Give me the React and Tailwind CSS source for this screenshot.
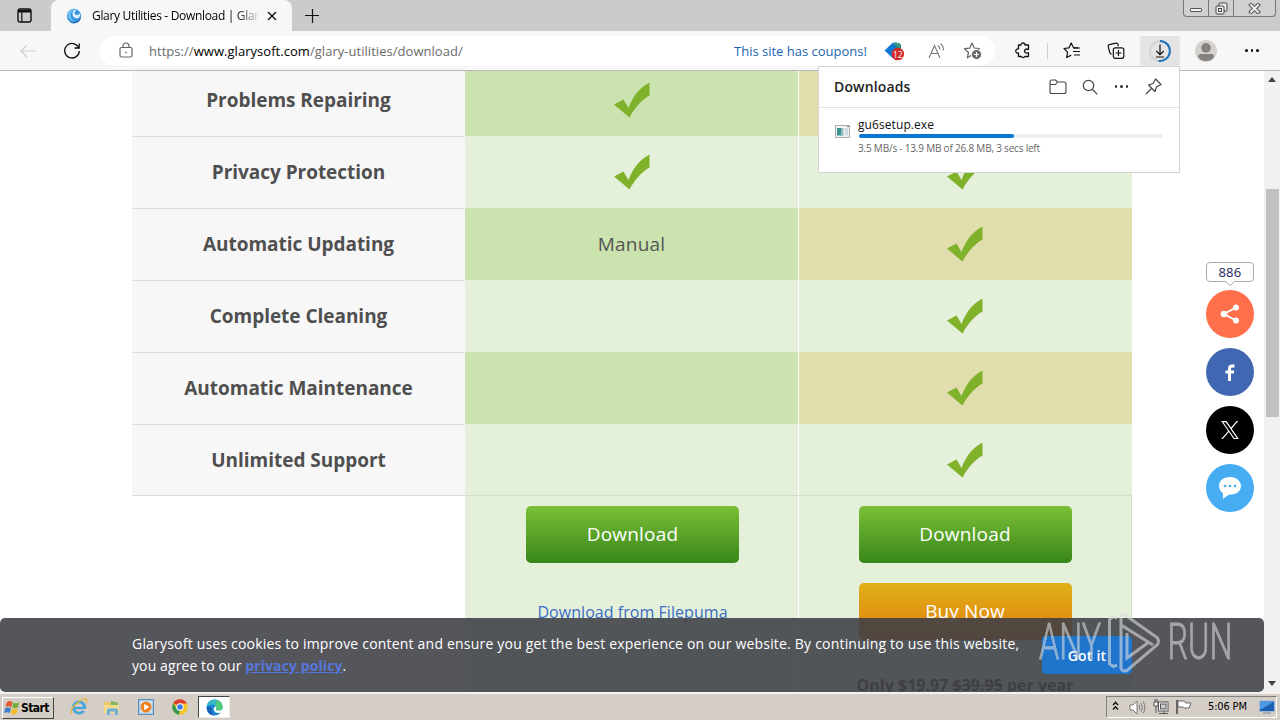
import React from "react";

const rows = [
  { name: "Problems Repairing", free: "check", pro: "check" },
  { name: "Privacy Protection", free: "check", pro: "check" },
  { name: "Automatic Updating", free: "Manual", pro: "check" },
  { name: "Complete Cleaning", free: "", pro: "check" },
  { name: "Automatic Maintenance", free: "", pro: "check" },
  { name: "Unlimited Support", free: "", pro: "check" },
];

function Check() {
  return (
    <svg width="36" height="36" viewBox="0 0 36 36">
      <path
        d="M0 22.5 L9.5 17.5 L14.5 26 C19 14.5 25 6 35.5 0.5 V13.5 C27.5 18 21 25.500 15.500 35.500 Z"
        fill="#7fb12b"
      />
    </svg>
  );
}

function Cell({ value }) {
  if (value === "check") return <Check />;
  return (
    <span className="text-[19px] tracking-[0.2px] text-[#555]">{value}</span>
  );
}

function TabStrip() {
  return (
    <div className="w-full h-[31px] bg-[#cbcbcb] flex flex-row items-start">
      <div className="w-[49px] h-[31px] flex items-center justify-center">
        <svg width="15" height="15" viewBox="0 0 15 15" fill="none" stroke="#111">
          <rect x="1" y="1" width="13" height="13" rx="2" strokeWidth="1.4" />
          <path d="M1 3.2h13" strokeWidth="2.600" />
          <path d="M4.800 3v11" strokeWidth="1.200" />
        </svg>
      </div>
      <div className="w-[241px] h-[31px] bg-[#f7f7f7] rounded-t-[8px] flex flex-row items-center ml-[2px] pl-[15px]">
        <svg width="16" height="16" viewBox="0 0 16 16">
          <circle cx="8" cy="8" r="7.200" fill="#3d97e0" />
          <path d="M2.500 13Q9 17 15 9.500A7.300 7.300 0 0 1 2.500 13Z" fill="#1c5bb0" />
          <path d="M1.500 5.500Q4 1 9.500.8 4 4 4.500 8 5 11.500 9 13.500 2 13 1.500 5.500Z" fill="#6cc4f5" />
          <path d="M8.500 1.800Q5.500 5 7 8t5.500 2.200Q14.500 8 14 5.500 11 8 9 6.500 7.500 5 10.500 1.800Z" fill="#e2f3fd" />
        </svg>
        <span className="ml-[10px] w-[166px] overflow-hidden whitespace-nowrap text-[12px] leading-[16px] tracking-[-0.32px] bg-gradient-to-r from-black from-84% to-[#d5d5d5] bg-clip-text text-transparent">
          Glary Utilities - Download | Glar
        </span>
        <svg className="ml-[9px]" width="10" height="10" viewBox="0 0 10 10">
          <path d="M1 1l8 8M9 1l-8 8" stroke="#111" strokeWidth="1.400" />
        </svg>
      </div>
      <svg className="mt-[9px] ml-[13px]" width="14" height="14" viewBox="0 0 14 14">
        <path d="M7.500 0v14M0 6.500h14" stroke="#111" strokeWidth="1.200" />
      </svg>
      <div className="ml-auto mr-[4px] w-[93px] h-[17px] border border-t-0 border-[#777] rounded-b-[4px] flex flex-row bg-[#d0d0d0]">
        <div className="w-[25px] flex items-center justify-center border-r border-[#777]">
          <div className="w-[12px] h-[4px] mt-[4px] border border-[#555] rounded-[1px] bg-[#f4f4f4]" />
        </div>
        <div className="w-[25px] flex items-center justify-center border-r border-[#777]">
          <svg width="13" height="13" viewBox="0 0 13 13" fill="#eee" stroke="#444">
            <rect x="4" y="1" width="8" height="8" rx="1" />
            <rect x="1" y="4" width="8" height="8" rx="1" />
            <rect x="3.500" y="6.500" width="3" height="3" />
          </svg>
        </div>
        <div className="flex-1 flex items-center justify-center">
          <svg width="13" height="11" viewBox="0 0 13 11">
            <path d="M3 2l7 7M10 2l-7 7" stroke="#555" strokeWidth="4" strokeLinecap="square" />
            <path d="M3 2l7 7M10 2l-7 7" stroke="#eee" strokeWidth="2" strokeLinecap="square" />
          </svg>
        </div>
      </div>
    </div>
  );
}

function AddressBar() {
  return (
    <div className="w-[895px] h-[30px] bg-white rounded-full flex flex-row items-center pl-[19px]">
      <svg width="14" height="17" viewBox="0 0 14 17" fill="none" stroke="#666">
        <rect x="1" y="5.500" width="12" height="9.500" rx="1.500" strokeWidth="1.200" />
        <path d="M4 5.500V4a3 3 0 0 1 6 0v1.500" strokeWidth="1.200" />
        <circle cx="7" cy="10.300" r="0.900" fill="#666" stroke="none" />
      </svg>
      <span className="ml-[16px] w-[585px] text-[13px] leading-[18px] tracking-[0.04px] text-[#6b6b6b] whitespace-nowrap">
        https://<span className="text-black">www.glarysoft.com</span>
        /glary-utilities/download/
      </span>
      <span className="w-[134px] text-[13px] leading-[18px] text-[#1a66b0] whitespace-nowrap">
        This site has coupons!
      </span>
      <svg className="ml-[16px]" width="22" height="20" viewBox="0 0 22 20">
        <path d="M8 2h7l2 2v8l-5 2z" fill="#277b72" />
        <path d="M0.500 9.500L8.500 2l3 .5v13l-3 1.500z" fill="#0f78d4" />
        <path d="M8 2l4-1 4 3v4l-3-3z" fill="#3c9c8b" />
        <circle cx="13.800" cy="13" r="6.300" fill="#d32a2a" />
        <text x="13.800" y="16.500" textAnchor="middle" fontSize="8.500" fill="#fff">12</text>
      </svg>
      <svg className="ml-[22px]" width="18" height="16" viewBox="0 0 18 16" fill="none" stroke="#777" strokeWidth="1.100">
        <path d="M1 15L6.500 2.500 12 15M3 10.500h7" />
        <path d="M10 2.500q2 1.500 1.800 4M12.500 0.800q3.300 2.700 2.800 6.700" />
      </svg>
      <svg className="ml-[17px]" width="20" height="18" viewBox="0 0 20 18">
        <path d="M9 1l2.200 5 5.300.5-4 3.700 1.200 5.300L9 13l-4.700 2.800L5.500 10.500l-4-3.800 5.300-.6z" fill="none" stroke="#666" strokeWidth="1.200" strokeLinejoin="round" />
        <circle cx="13.500" cy="12.500" r="5" fill="#666" stroke="#fff" strokeWidth="1" />
        <path d="M13.500 10v5M11 12.500h5" stroke="#fff" strokeWidth="1.200" />
      </svg>
    </div>
  );
}

function Toolbar() {
  return (
    <div className="w-full h-[40px] bg-[#f7f7f7] border-b border-[#b9b9b9] flex flex-row items-center">
      <div className="w-[56px] flex justify-center">
        <svg width="16" height="14" viewBox="0 0 16 14" fill="none" stroke="#cfcfcf" strokeWidth="1.200">
          <path d="M16 7H1M7 1L1 7l6 6" />
        </svg>
      </div>
      <div className="w-[32px] mr-[12px] flex justify-center">
        <svg width="18" height="18" viewBox="0 0 18 18" fill="none" stroke="#111" strokeWidth="1.300">
          <path d="M15.800 6A7.300 7.300 0 1 0 16.300 9" />
          <path d="M16.200 1.500V6h-4.700" />
        </svg>
      </div>
      <AddressBar />
      <div className="ml-[8px] w-[40px] flex justify-center">
        <svg width="16" height="17" viewBox="0 0 16 17" fill="none" stroke="#111" strokeWidth="1.300" strokeLinejoin="round">
          <path d="M3.500 3H6a2 2 0 0 1 4 0h3.500v4a.5.500 0 0 1-.8.400 2 2 0 1 0 0 3.300.5.500 0 0 1 .8.400V14.500H10a2 2 0 0 1-3.500 0H3.500V11A2.100 2.100 0 1 1 3.500 7Z" />
        </svg>
      </div>
      <div className="ml-[4px] w-px h-[16px] bg-[#cfcfcf]" />
      <div className="ml-[4px] w-[40px] flex justify-center">
        <svg width="18" height="17" viewBox="0 0 18 17" fill="none" stroke="#111" strokeWidth="1.200" strokeLinejoin="round">
          <path d="M15 5.800h-4.400L8.200 1 6 5.800 1 6.500l3.600 3.700-.9 5.300 4.500-2.400" />
          <path d="M10.500 6H17M10 9.500h7M11 13h6" />
        </svg>
      </div>
      <div className="ml-[4px] w-[40px] flex justify-center">
        <svg width="18" height="18" viewBox="0 0 18 18" fill="none" stroke="#111" strokeWidth="1.200">
          <path d="M4.500 12.500L2.800 11 1.200 4.500Q1 3 2.300 2.600L9 1.200q1.600-.3 2 1.300l.4 1.700" />
          <rect x="6.300" y="5.800" width="10.500" height="10.500" rx="2" fill="#f7f7f7" />
          <path d="M11.500 8v6M8.500 11h6" />
        </svg>
      </div>
      <div className="ml-[4px] w-[40px] h-[30px] bg-[#e4e4e4] rounded-[3px] flex items-center justify-center">
        <svg width="24" height="24" viewBox="0 0 24 24" fill="none">
          <circle cx="12" cy="12" r="10" stroke="#d4d4d4" strokeWidth="2" />
          <path d="M12 2a10 10 0 1 1-1.500 19.900" stroke="#1e73be" strokeWidth="2" />
          <path d="M12 5.500v10M8.300 12l3.700 3.700 3.700-3.700M8 18h8" stroke="#111" strokeWidth="1.200" />
        </svg>
      </div>
      <div className="ml-[6px] w-[40px] flex justify-center">
        <svg width="22" height="22" viewBox="0 0 22 22">
          <circle cx="11" cy="11" r="11" fill="#d4d1ce" />
          <circle cx="11" cy="7.800" r="4.800" fill="#85817e" />
          <path d="M3 16.500Q3 14 6 14h10q3 0 3 2.500-2 4.500-8 4.500t-8-4.500Z" fill="#85817e" />
        </svg>
      </div>
      <div className="ml-[6px] w-[40px] flex justify-center gap-[3px]">
        <div className="w-[2.500px] h-[2.500px] rounded-full bg-black" />
        <div className="w-[2.500px] h-[2.500px] rounded-full bg-black" />
        <div className="w-[2.500px] h-[2.500px] rounded-full bg-black" />
      </div>
    </div>
  );
}

function DownloadsPopup() {
  return (
    <div className="absolute left-[818px] top-[66px] w-[362px] h-[107px] bg-white border border-[#d4d4d4] flex flex-col">
      <div className="h-[41px] border-b border-[#e2e2e2] flex flex-row items-center pl-[15px] pr-[17px] pb-px">
        <h2 className="text-[14px] font-semibold text-[#222] tracking-[0.15px]">Downloads</h2>
        <svg className="ml-auto" width="18" height="16" viewBox="0 0 18 16" fill="none" stroke="#444" strokeWidth="1.100">
          <path d="M1 3q0-2 2-2h3.500l2 2H15q2 0 2 2v7.500q0 2-2 2H3q-2 0-2-2ZM1 5.500h5.500l2-2.500" />
        </svg>
        <svg className="ml-[15px]" width="16" height="16" viewBox="0 0 16 16" fill="none" stroke="#444" strokeWidth="1.200">
          <circle cx="6.500" cy="6.500" r="5.200" />
          <path d="M10.500 10.500l4.800 4.800" />
        </svg>
        <div className="ml-[17px] flex gap-[3px]">
          <div className="w-[2.500px] h-[2.500px] rounded-full bg-[#333]" />
          <div className="w-[2.500px] h-[2.500px] rounded-full bg-[#333]" />
          <div className="w-[2.500px] h-[2.500px] rounded-full bg-[#333]" />
        </div>
        <svg className="ml-[17px]" width="17" height="17" viewBox="0 0 17 17" fill="none" stroke="#444" strokeWidth="1.200" strokeLinejoin="round">
          <path d="M10.500 1l5.500 5.500-1.500.8-3 1.700-1.500 4.500L3.500 7 8 5.500l1.700-3ZM6.500 10.500L1 16" />
        </svg>
      </div>
      <div className="flex flex-row pt-[8px] pl-[16px]">
        <svg className="mt-[9px]" width="15" height="13" viewBox="0 0 15 13">
          <rect x="0.500" y="0.500" width="14" height="12" fill="#f0f2f3" stroke="#a8b0b5" />
          <rect x="2" y="3" width="6" height="7.500" fill="#3c8f90" />
          <rect x="6" y="3" width="2.500" height="7.500" fill="#93bcc5" />
          <rect x="10" y="3" width="3" height="7.500" fill="#ccdbe2" />
          <path d="M12 1.500h2" stroke="#d2734f" />
        </svg>
        <div className="ml-[9px] flex flex-col">
          <span className="-ml-px text-[12px] leading-[17px] tracking-[0.08px] text-[#111]">gu6setup.exe</span>
          <div className="mt-px w-[304px] h-[4px] rounded-full bg-[#ededed]">
            <div className="w-[155px] h-[4px] rounded-full bg-[#0877d2]" />
          </div>
          <span className="-ml-px mt-[3px] text-[10px] leading-[14px] tracking-[-0.2px] text-[#666] whitespace-nowrap">
            3.5 MB/s - 13.9 MB of 26.8 MB, 3 secs left
          </span>
        </div>
      </div>
    </div>
  );
}

function CompareTable() {
  return (
    <div className="w-[1000px] ml-[132px] -mt-[7px] flex flex-col">
      {rows.map((row, i) => (
        <div key={row.name} className="w-full h-[72px] shrink-0 flex flex-row">
          <div className="w-[333px] h-full border-t border-[#dcdcdc] bg-[#f7f7f7] flex items-center justify-center">
            <span className="text-[19px] font-bold text-[#4f4f4f] tracking-[-0.03px] whitespace-nowrap">{row.name}</span>
          </div>
          <div
            className={`w-[333px] h-full flex items-center justify-center ${
              i % 2 === 0 ? "bg-[#cbe3ae]" : "bg-[#e5f0da]"
            }`}
          >
            <Cell value={row.free} />
          </div>
          <div
            className={`w-[334px] h-full border-l border-white pr-[2px] flex items-center justify-center ${
              i % 2 === 0 ? "bg-[#e1deae]" : "bg-[#e5f0da]"
            }`}
          >
            <Cell value={row.pro} />
          </div>
        </div>
      ))}
      <div className="w-full -mt-px h-px shrink-0 bg-[#d8ddd3]" />
      <div className="w-[667px] h-[220px] ml-[333px] flex flex-row">
        <div className="w-[333px] h-full bg-[#e5f0da] flex flex-col items-center pt-[10px] pl-[2px]">
          <button className="shrink-0 w-[213px] h-[57px] rounded-[5px] bg-gradient-to-b from-[#7cc038] to-[#37871a] text-white text-[19px] tracking-[0.18px]">
            Download
          </button>
          <a className="mt-[36px] text-[16px] leading-[26px] tracking-[0.05px] text-[#3b6cc4]">Download from Filepuma</a>
        </div>
        <div className="w-[334px] h-full bg-[#e5f0da] border-l border-l-white border-r border-r-[#d5dfcd] flex flex-col items-center pt-[10px]">
          <button className="shrink-0 w-[213px] h-[57px] rounded-[5px] bg-gradient-to-b from-[#7cc038] to-[#37871a] text-white text-[19px] tracking-[0.18px]">
            Download
          </button>
          <button className="shrink-0 mt-[20px] w-[213px] h-[57px] rounded-[5px] bg-gradient-to-b from-[#dfb017] to-[#df7c10] text-white text-[19px] tracking-[0.1px]">
            Buy Now
          </button>
          <p className="mt-[32px] text-[16px] leading-[26px] font-bold text-[#444] whitespace-nowrap">
            Only $19.97 <s>$39.95</s> per year
          </p>
        </div>
      </div>
    </div>
  );
}

function ShareBar() {
  return (
    <div className="absolute left-[1206px] top-[262px] w-[48px] flex flex-col items-center">
      <div className="w-[48px] h-[20px] border border-[#aaa] rounded-[4px] bg-white text-[13px] leading-[19px] tracking-[0.3px] text-center text-[#21265c]">
        886
      </div>
      <svg className="-mt-px" width="10" height="5" viewBox="0 0 10 5">
        <path d="M0 0l5 4.500L10 0" fill="#fff" stroke="#aaa" />
      </svg>
      <div className="mt-[4px] w-[48px] h-[48px] rounded-full bg-[#ff6f4b] flex items-center justify-center">
        <svg width="20" height="20" viewBox="0 0 20 20">
          <path d="M16 3.500L4 10l12 6.500" fill="none" stroke="#fff" strokeWidth="1.800" />
          <circle cx="16" cy="3.500" r="3" fill="#fff" />
          <circle cx="4" cy="10" r="3.300" fill="#fff" />
          <circle cx="16" cy="16.500" r="3" fill="#fff" />
        </svg>
      </div>
      <div className="mt-[10px] w-[48px] h-[48px] rounded-full bg-[#4267b2] flex items-center justify-center">
        <svg width="10" height="17" viewBox="0 0 10 17">
          <path d="M3 17V9.500H.5v-3H3V4.500Q3 .5 7 .5h2.500v3H7.800Q6 3.500 6 5v1.500h3.300l-.5 3H6V17Z" fill="#fff" />
        </svg>
      </div>
      <div className="mt-[10px] w-[48px] h-[48px] rounded-full bg-black flex items-center justify-center">
        <svg width="18" height="18" viewBox="0 0 24 24" fill="#fff">
          <path d="M14.300 10.200L23 0h-2.100l-7.500 8.800L7.300 0H.3l9.200 13.300L.3 24h2.100l8-9.400 6.500 9.400h7L14.300 10.200Zm-2.900 3.300l-.9-1.300L3.100 1.600h3.200l6 8.500.9 1.400 7.800 11.100h-3.200l-6.400-9.100Z" />
        </svg>
      </div>
      <div className="mt-[10px] w-[48px] h-[48px] rounded-full bg-[#46adf3] flex items-center justify-center">
        <svg width="24" height="22" viewBox="0 0 24 22">
          <path d="M12 0C5.500 0 1 3.800 1 9q0 4.500 4 7.300L5 22l5.500-4.300H12c6.500 0 11-3.700 11-8.700S18.500 0 12 0Z" fill="#fff" />
          <circle cx="7" cy="9" r="1.300" fill="#46adf3" />
          <circle cx="12" cy="9" r="1.300" fill="#46adf3" />
          <circle cx="17" cy="9" r="1.300" fill="#46adf3" />
        </svg>
      </div>
    </div>
  );
}

function CookieBar() {
  return (
    <div className="absolute left-0 top-[618px] w-[1264px] h-[74px] rounded-[5px] bg-[rgba(61,63,70,0.88)] flex flex-row items-center pl-[132px]">
      <p className="w-[910px] text-[14px] leading-[22px] tracking-[0.2px] text-white">
        Glarysoft uses cookies to improve content and ensure you get the best experience on our website. By continuing to use this website,
        <br />
        <span className="tracking-[0.1px]">
          you agree to our <a className="font-bold text-[#5577dd] underline">privacy policy</a>.
        </span>
      </p>
      <button className="w-[90px] h-[38px] rounded-[4px] bg-[#1f74cc] text-white text-[14px] font-semibold tracking-[0.2px]">
        Got it
      </button>
    </div>
  );
}

function Watermark() {
  return (
    <svg className="absolute left-[1036px] top-[606px]" width="200" height="70" viewBox="0 0 200 70" fill="none" opacity="0.6">
      <text x="3" y="53" fontSize="50" textLength="62" lengthAdjust="spacingAndGlyphs" fill="#d8dadd" stroke="#d8dadd" strokeWidth="0.900" className="font-['Roboto'] font-light">ANY</text>
      <path d="M81 12l-4-1.500-3.500 3V58l4 2.500 3.500-1.500" stroke="#dcdee0" strokeWidth="3" />
      <path d="M85 19V10.500Q86 7 89 9L121 31.500q3 4 0 7.500L91 64.500q-4.500 1.500-6-2V19L117 39" stroke="#dcdee0" strokeWidth="3" />
      <path d="M91 27v25l22-16" stroke="#dcdee0" strokeWidth="3" />
      <text x="131.500" y="53" fontSize="50" textLength="65" lengthAdjust="spacingAndGlyphs" fill="#d8dadd" stroke="#d8dadd" strokeWidth="0.900" className="font-['Roboto'] font-light">RUN</text>
    </svg>
  );
}

function Scrollbar() {
  return (
    <div className="w-[16px] h-full bg-[#f1f1f1] flex flex-col items-center">
      <svg className="mt-[6px]" width="8" height="5" viewBox="0 0 8 5">
        <path d="M0 5l4-5 4 5Z" fill="#444" />
      </svg>
      <div className="mt-[107px] w-[13px] h-[228px] bg-[#c1c1c1]" />
      <svg className="mt-auto mb-[6px]" width="8" height="5" viewBox="0 0 8 5">
        <path d="M0 0l4 5 4-5Z" fill="#444" />
      </svg>
    </div>
  );
}

function Taskbar() {
  return (
    <div className="w-full h-[28px] bg-[#d5cec6] border-t-2 border-[#f4f2ef] flex flex-row items-center font-['DejaVu_Sans_Condensed','DejaVu_Sans',sans-serif]">
      <div className="ml-[2px] mt-px w-[52px] h-[22px] bg-[#d5cec6] border border-t-white border-l-white border-r-[#444] border-b-[#444] flex flex-row items-center pl-px">
        <svg width="16" height="16" viewBox="0 0 16 16">
          <path d="M3 2q3-2 5.500.0L7.300 7.200Q4.500 5.500 1.500 7Z" fill="#e2582c" />
          <path d="M9.300 2.500q3 1.500 6-.2L14 7.300q-3 1.600-5.800.2Z" fill="#77ad3f" />
          <path d="M1.200 8Q4 6.800 7 8.200L5.800 13Q3 11.500.0 13Z" fill="#3d80c9" />
          <path d="M8 8.500q3 1.500 5.800.0L12.500 13.500q-3 1.700-5.700.2Z" fill="#f3bd28" />
        </svg>
        <span className="ml-px text-[12px] leading-[16px] font-bold text-black tracking-[-0.55px]">Start</span>
      </div>
      <div className="ml-[15px] w-[20px] flex justify-center">
        <svg width="18" height="18" viewBox="0 0 18 18" fill="none">
          <circle cx="9" cy="9.500" r="5.700" stroke="#45a4dc" strokeWidth="2.800" />
          <path d="M4 10h12" stroke="#45a4dc" strokeWidth="2.400" />
          <path d="M12.500 12h4" stroke="#d5cec6" strokeWidth="2" />
          <path d="M2 16Q-1 12 7 5q8-6 9.500-3.500.8 1.200-.5 3.500" stroke="#e4b83b" strokeWidth="1.400" />
        </svg>
      </div>
      <div className="ml-[13px] w-[20px] flex justify-center">
        <svg width="18" height="17" viewBox="0 0 18 17">
          <path d="M1 3h6l1 1.500h7V14H1Z" fill="#e8c962" />
          <path d="M8 2l7 1.500V7H8Z" fill="#80b55c" />
          <path d="M1 6h15v8H1Z" fill="#f3dd8c" />
          <path d="M4 16v-5q0-1.500 1.500-1.500h8q1.500 0 1.500 1.500v5h-3v-3.500H7V16Z" fill="#6bb0d8" />
        </svg>
      </div>
      <div className="ml-[14px] w-[20px] flex justify-center">
        <svg width="16" height="16" viewBox="0 0 16 16">
          <rect x="0.500" y="0.500" width="15" height="15" fill="#a9cae8" stroke="#5a8fc0" />
          <rect x="2.500" y="2.500" width="11" height="11" fill="#e9f1f8" />
          <circle cx="8" cy="8" r="5.500" fill="#ee8320" />
          <path d="M6.200 4.800L11.300 8l-5.100 3.200Z" fill="#fff" />
        </svg>
      </div>
      <div className="ml-[14px] w-[20px] flex justify-center">
        <svg width="16" height="16" viewBox="0 0 16 16">
          <circle cx="8" cy="8" r="7.800" fill="#f5c52a" />
          <path d="M8 8L1.300 4A7.800 7.800 0 0 1 14.900 4.500H8Z" fill="#dd3c30" />
          <path d="M1.300 4L5 10.500 8 11.500 7 15.700A7.800 7.800 0 0 1 1.300 4Z" fill="#359b50" />
          <circle cx="8" cy="8" r="3.700" fill="#fff" />
          <circle cx="8" cy="8" r="2.800" fill="#3f7fe8" />
        </svg>
      </div>
      <div className="ml-[8px] w-[32px] h-[22px] bg-white border border-t-[#444] border-l-[#444] border-r-[#eee] border-b-[#eee] flex items-center justify-center">
        <svg width="17" height="17" viewBox="0 0 17 17">
          <circle cx="8.500" cy="8.500" r="8" fill="#1e86d2" />
          <path d="M.6 7.500Q1.500 1 8.500.5q7.500.5 8 7 0 4-4 4.200-3 0-2.500-1.400Q11 8.500 9.500 7 6 4 .6 7.500Z" fill="#35b9c4" />
          <path d="M11 1q5 1.500 5.500 6.500 0 4-4 4.200-3 0-2.500-1.400Q12 8 9.500 6Z" fill="#54cb77" />
          <path d="M9.500 7.200Q7 9 8 11.500q1.500 2.800 5 2.500 1.500 0 2.800-.8l1.200-3.200q-2 1.800-4.500 1.700-3 0-2.500-1.400Q11 8.500 9.500 7.200Z" fill="#fff" />
          <path d="M5.500 8q-1 5 3.500 8.500-7.500 0-8.400-7.500Q2 7 5.500 8Z" fill="#1360b5" />
        </svg>
      </div>
      <div className="ml-auto w-[171px] h-[22px] mr-[3px] border border-t-[#808080] border-l-[#808080] border-r-white border-b-white flex flex-row items-center">
        <svg className="ml-[5px] -mt-[3px]" width="7" height="10" viewBox="0 0 7 10" fill="none" stroke="#111" strokeWidth="1.400">
          <path d="M1 4l2.500-2.800L6 4M1 8.500l2.500-2.800L6 8.500" />
        </svg>
        <svg className="ml-[10px]" width="17" height="15" viewBox="0 0 17 15" fill="none" stroke="#777">
          <path d="M1 5h3l4-4v13l-4-4H1Z" fill="#fff" />
          <path d="M10 5q1.500 2.500 0 5M12 3.200q3 4.300 0 8.600M14 1.500q4 6 0 12" />
        </svg>
        <svg className="ml-[7px]" width="17" height="16" viewBox="0 0 17 16" stroke="#555">
          <rect x="5.500" y="3" width="9.500" height="9" fill="#fff" />
          <rect x="7.500" y="5" width="5.500" height="5" fill="#ccc" />
          <path d="M6 14.500h9M11 12v2" fill="none" />
          <path d="M1 3h4v4H1ZM2 0v3M4 0v3M3 7v7" fill="#fff" />
        </svg>
        <svg className="ml-[5px]" width="17" height="16" viewBox="0 0 17 16" stroke="#666">
          <path d="M2 1v14" strokeWidth="2" />
          <path d="M3 2h6.500l1.500 2h5l-2 5h-5L7.500 8H3Z" fill="#fff" />
        </svg>
        <span className="ml-[16px] text-[11px] leading-[16px] text-black tracking-[-0.15px] whitespace-nowrap">5:06 PM</span>
        <svg className="ml-auto mr-px" width="16" height="14" viewBox="0 0 16 14">
          <rect x="0.500" y="1" width="15" height="10.500" rx="1" fill="#1d5fb5" stroke="#a5bbd5" />
          <path d="M1 1.500h14L3 9H1Z" fill="#4c9ae0" />
          <path d="M4 13h8" stroke="#7d8c9b" />
        </svg>
      </div>
    </div>
  );
}

function App() {
  return (
    <div className="relative w-[1280px] h-[720px] overflow-hidden bg-white flex flex-col font-['Open_Sans','Noto_Sans',sans-serif]">
      <TabStrip />
      <Toolbar />
      <div className="w-full h-[621px] flex flex-row">
        <div className="w-[1264px] h-full overflow-hidden">
          <CompareTable />
        </div>
        <Scrollbar />
      </div>
      <Taskbar />
      <ShareBar />
      <CookieBar />
      <DownloadsPopup />
      <Watermark />
    </div>
  );
}

export default App;
